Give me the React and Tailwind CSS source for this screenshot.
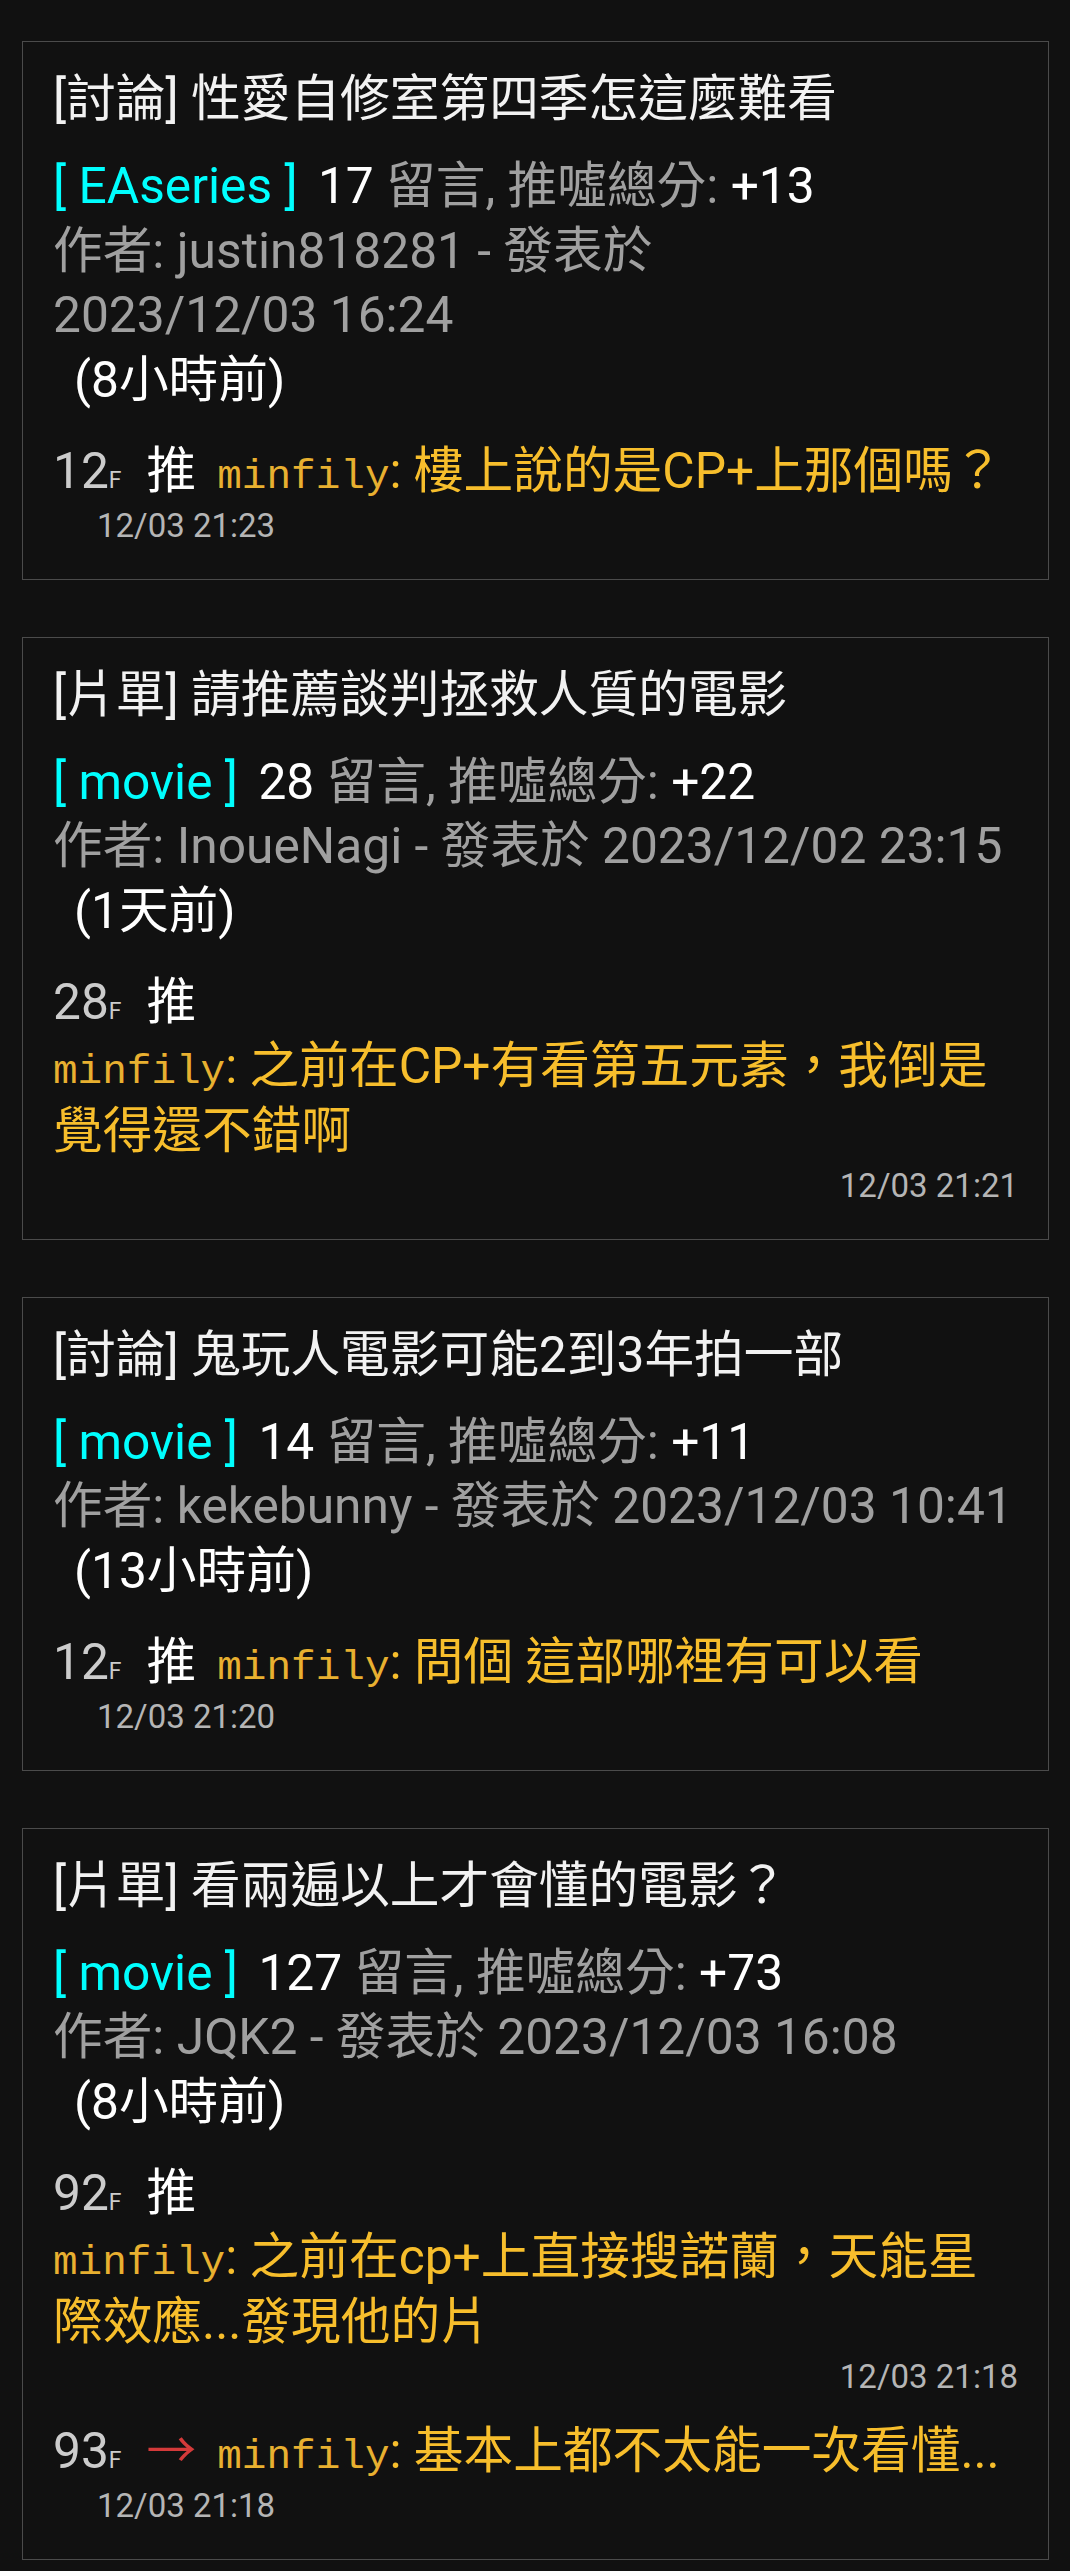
import React from "react";

const SANS = "font-['Roboto','Noto_Sans_CJK_TC',sans-serif]";
const MONO = "font-['Liberation_Mono','DejaVu_Sans_Mono',monospace]";

function Card({ children }) {
  return (
    <div className="ml-[22px] mr-[21px] border border-[#4b4b4b] px-[30px] pt-[25px] pb-[29px]">
      {children}
    </div>
  );
}

function Title({ children }) {
  return <div className="whitespace-nowrap text-[#f2f2f2]">{children}</div>;
}

function Meta({ board, count, score }) {
  return (
    <div className="mt-[22.5px] whitespace-nowrap">
      <span className="text-[#00ffff]">[ {board} ]</span>{" "}
      <span className="ml-[8px] text-white">{count}</span>{" "}
      <span className="text-[#a0a0a0]">留言, 推噓總分:</span>{" "}
      <span className="text-white">{score}</span>
    </div>
  );
}

function Line({ className = "", children }) {
  return <div className={"whitespace-nowrap " + className}>{children}</div>;
}

function Floor({ n, push }) {
  return (
    <>
      <span className="text-[#cccccc]">
        {n}
        <span className="text-[23px] leading-none">F</span>
      </span>
      {push === "推" ? (
        <span className="ml-[25px] text-white">推</span>
      ) : (
        <span className="ml-[25px] text-[#d43a3a]">→</span>
      )}
    </>
  );
}

function User({ first }) {
  return (
    <span
      className={
        MONO +
        " text-[41px] leading-none text-[#e8b030]" +
        (first ? "" : " ml-[21px]")
      }
    >
      minfily
    </span>
  );
}

function Time({ right, children }) {
  return (
    <div
      className={
        "text-[33px] leading-[46.5px] text-[#b5b5b5] " +
        (right ? "text-right" : "pl-[44px]")
      }
    >
      {children}
    </div>
  );
}

function InlineComment({ n, push, text, time, className = "" }) {
  return (
    <div className={className}>
      <div className="whitespace-nowrap">
        <Floor n={n} push={push} />
        <User />
        <span className="text-[#f7be2c]">: {text}</span>
      </div>
      <Time>{time}</Time>
    </div>
  );
}

function BlockComment({ n, push, lines, time, className = "" }) {
  return (
    <div className={className}>
      <div className="whitespace-nowrap">
        <Floor n={n} push={push} />
      </div>
      <div className="whitespace-nowrap">
        <User first />
        <span className="text-[#f7be2c]">: {lines[0]}</span>
      </div>
      <div className="whitespace-nowrap text-[#f7be2c]">{lines[1]}</div>
      <Time right>{time}</Time>
    </div>
  );
}

export default function App() {
  return (
    <div
      className={
        SANS +
        " min-h-screen bg-[#111111] pt-[41px] pb-[12px] text-[49.7px] leading-[64.5px]"
      }
    >
      <div className="flex flex-col gap-[57px]">
        <Card>
          <Title>[討論] 性愛自修室第四季怎這麼難看</Title>
          <Meta board="EAseries" count="17" score="+13" />
          <Line className="text-[#a0a0a0]">作者: justin818281 - 發表於</Line>
          <Line className="text-[#a0a0a0]">2023/12/03 16:24</Line>
          <Line className="pl-[21px] text-white">(8小時前)</Line>
          <InlineComment
            className="mt-[26.5px]"
            n="12"
            push="推"
            text="樓上說的是CP+上那個嗎？"
            time="12/03 21:23"
          />
        </Card>

        <Card>
          <Title>[片單] 請推薦談判拯救人質的電影</Title>
          <Meta board="movie" count="28" score="+22" />
          <Line className="text-[#a0a0a0]">
            作者: InoueNagi - 發表於 2023/12/02 23:15
          </Line>
          <Line className="pl-[21px] text-white">(1天前)</Line>
          <BlockComment
            className="mt-[26.5px]"
            n="28"
            push="推"
            lines={["之前在CP+有看第五元素，我倒是", "覺得還不錯啊"]}
            time="12/03 21:21"
          />
        </Card>

        <Card>
          <Title>[討論] 鬼玩人電影可能2到3年拍一部</Title>
          <Meta board="movie" count="14" score="+11" />
          <Line className="text-[#a0a0a0]">
            作者: kekebunny - 發表於 2023/12/03 10:41
          </Line>
          <Line className="pl-[21px] text-white">(13小時前)</Line>
          <InlineComment
            className="mt-[26.5px]"
            n="12"
            push="推"
            text="問個 這部哪裡有可以看"
            time="12/03 21:20"
          />
        </Card>

        <Card>
          <Title>[片單] 看兩遍以上才會懂的電影？</Title>
          <Meta board="movie" count="127" score="+73" />
          <Line className="text-[#a0a0a0]">
            作者: JQK2 - 發表於 2023/12/03 16:08
          </Line>
          <Line className="pl-[21px] text-white">(8小時前)</Line>
          <BlockComment
            className="mt-[26.5px]"
            n="92"
            push="推"
            lines={["之前在cp+上直接搜諾蘭，天能星", "際效應...發現他的片"]}
            time="12/03 21:18"
          />
          <InlineComment
            className="mt-[18px]"
            n="93"
            push="→"
            text="基本上都不太能一次看懂..."
            time="12/03 21:18"
          />
        </Card>
      </div>
    </div>
  );
}
